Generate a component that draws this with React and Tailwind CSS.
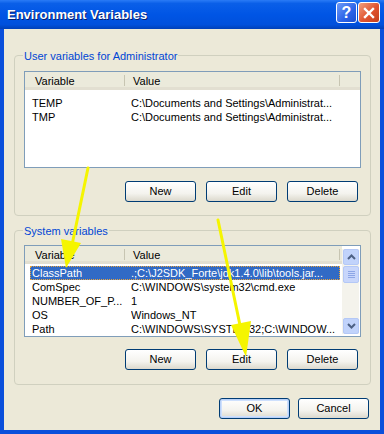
import React from 'react';

const userVars = [
  { name: 'TEMP', value: 'C:\\Documents and Settings\\Administrat...' },
  { name: 'TMP', value: 'C:\\Documents and Settings\\Administrat...' },
];

const systemVars = [
  { name: 'ClassPath', value: '.;C:\\J2SDK_Forte\\jdk1.4.0\\lib\\tools.jar...', selected: true },
  { name: 'ComSpec', value: 'C:\\WINDOWS\\system32\\cmd.exe' },
  { name: 'NUMBER_OF_P...', value: '1' },
  { name: 'OS', value: 'Windows_NT' },
  { name: 'Path', value: 'C:\\WINDOWS\\SYSTEM32;C:\\WINDOW...' },
];

function XpButton({ children, isDefault }) {
  return (
    <button
      className={`w-[71px] h-[21px] rounded-[3px] border border-[#003C74] text-[11px] text-black bg-[linear-gradient(180deg,#ffffff_0%,#f4f3ee_60%,#dcd9cd_100%)] ${
        isDefault ? 'shadow-[inset_0_0_0_1px_#b9d1f8,inset_0_0_0_2px_#cee0fd]' : ''
      }`}
    >
      {children}
    </button>
  );
}

function GroupBox({ label, children, className }) {
  return (
    <div className={`relative border border-[#D0D0BF] rounded-[4px] ${className}`}>
      <span className="absolute left-[8px] top-[-6px] bg-[#ECE9D8] px-[1px] text-[11px] leading-[12px] text-[#0046D5]">
        {label}
      </span>
      {children}
    </div>
  );
}

function ListHeader() {
  return (
    <div className="flex h-[18px] pt-[3px] bg-[#EBEADB] border-b-[3px] border-[#E2DFD1] text-[11px] text-black">
      <div className="w-[100px] h-[11px] pl-[10px] border-r border-[#C7C5B2] leading-[12px]">Variable</div>
      <div className="w-[215px] h-[11px] pl-[8px] border-r border-[#C7C5B2] leading-[12px]">Value</div>
      <div className="flex-1" />
    </div>
  );
}

function Row({ item }) {
  return (
    <div
      className={`flex h-[14px] ml-[5px] mr-[2px] items-center text-[11px] leading-[14px] ${
        item.selected ? 'bg-[#316AC5] text-white outline-1 outline-dotted outline-[#E8A33B] -outline-offset-1' : 'text-black'
      }`}
    >
      <div className="w-[101px] pl-[2px] whitespace-nowrap">{item.name}</div>
      <div className="flex-1 whitespace-nowrap overflow-hidden">{item.value}</div>
    </div>
  );
}

function Chevron({ down }) {
  return (
    <svg width="9" height="6" viewBox="0 0 9 6">
      <path
        d={down ? 'M1 1 L4.5 4.5 L8 1' : 'M1 5 L4.5 1.5 L8 5'}
        fill="none"
        stroke="#4D6185"
        strokeWidth="2"
      />
    </svg>
  );
}

function ScrollBar() {
  return (
    <div className="w-[17px] flex flex-col bg-[#F4F3EC] pl-[1px]">
      <div className="h-[16px] rounded-[2px] border border-[#B4C8F6] bg-[#C1D3FB] flex items-center justify-center">
        <Chevron />
      </div>
      <div className="h-[17px] mt-[1px] rounded-[2px] border border-[#B4C8F6] bg-[#C8D6FB] flex flex-col items-center justify-center gap-[1px]">
        <div className="w-[7px] h-[1px] bg-[#8DA6E6]" />
        <div className="w-[7px] h-[1px] bg-[#8DA6E6]" />
        <div className="w-[7px] h-[1px] bg-[#8DA6E6]" />
        <div className="w-[7px] h-[1px] bg-[#8DA6E6]" />
      </div>
      <div className="flex-1" />
      <div className="h-[16px] rounded-[2px] border border-[#B4C8F6] bg-[#C1D3FB] flex items-center justify-center">
        <Chevron down />
      </div>
    </div>
  );
}

export default function App() {
  return (
    <div
      className="relative w-[384px] h-[434px] flex flex-col bg-[#0A4FDB] overflow-hidden"
      style={{ fontFamily: '"Liberation Sans", Arial, sans-serif' }}
    >
      {/* Title bar */}
      <div className="h-[29px] flex items-center pl-[7px] pr-[4px] bg-[linear-gradient(180deg,#2a7bf6_0%,#0a5fe8_12%,#0055e5_50%,#0050dc_85%,#0040b8_100%)]">
        <span className="flex-1 text-[13px] font-bold text-white [text-shadow:1px_1px_0_#0A1E6A]">
          Environment Variables
        </span>
        <div className="flex gap-[1px] mb-[4px]">
          <div className="w-[21px] h-[21px] rounded-[3px] border border-white bg-[linear-gradient(135deg,#6e9bf7_0%,#2b63e8_60%,#1c4fd0_100%)] flex items-center justify-center text-white font-bold text-[16px] leading-none">
            ?
          </div>
          <div className="w-[22px] h-[21px] rounded-[3px] border border-white bg-[linear-gradient(135deg,#f2a07f_0%,#e0532f_55%,#c43f1d_100%)] flex items-center justify-center">
            <svg width="12" height="12" viewBox="0 0 12 12">
              <path d="M2 2 L10 10 M10 2 L2 10" stroke="white" strokeWidth="2.4" strokeLinecap="square" />
            </svg>
          </div>
        </div>
      </div>

      {/* Body */}
      <div className="flex-1 mx-[4px] mb-[4px] bg-[#ECE9D8] pl-[10px] pr-[9px] pt-[26px] flex flex-col">
        <GroupBox label="User variables for Administrator" className="h-[161px] px-[9px] pt-[15px]">
          <div className="h-[97px] border border-[#7F9DB9] bg-white flex flex-col">
            <ListHeader />
            <div className="pt-[6px]">
              {userVars.map((v) => (
                <Row key={v.name} item={v} />
              ))}
            </div>
          </div>
          <div className="flex justify-end gap-[10px] mt-[13px] pr-[3px]">
            <XpButton>New</XpButton>
            <XpButton>Edit</XpButton>
            <XpButton>Delete</XpButton>
          </div>
        </GroupBox>

        <GroupBox label="System variables" className="h-[155px] mt-[14px] px-[9px] pt-[14px]">
          <div className="h-[92px] border border-[#7F9DB9] bg-white flex">
            <div className="flex-1 flex flex-col">
              <ListHeader />
              <div className="pt-[2px]">
                {systemVars.map((v) => (
                  <Row key={v.name} item={v} />
                ))}
              </div>
            </div>
            <div className="pt-[3px] pb-[2px] pr-[1px] flex">
              <ScrollBar />
            </div>
          </div>
          <div className="flex justify-end gap-[10px] mt-[12px] pr-[3px]">
            <XpButton>New</XpButton>
            <XpButton>Edit</XpButton>
            <XpButton>Delete</XpButton>
          </div>
        </GroupBox>

        <div className="flex justify-end gap-[8px] mt-[13px] pr-[2px]">
          <XpButton isDefault>OK</XpButton>
          <XpButton>Cancel</XpButton>
        </div>
      </div>

      {/* Yellow annotation arrows */}
      <svg className="absolute inset-0 pointer-events-none" width="384" height="434" viewBox="0 0 384 434">
        <g stroke="#F5F500" strokeWidth="3" fill="#F5F500" strokeLinecap="round">
          <line x1="88" y1="168" x2="72" y2="245" />
          <polygon points="61,239 81,243 66,268" stroke="none" />
          <line x1="218" y1="220" x2="241" y2="330" />
          <polygon points="231,325 251,321 246,357" stroke="none" />
        </g>
      </svg>
    </div>
  );
}
